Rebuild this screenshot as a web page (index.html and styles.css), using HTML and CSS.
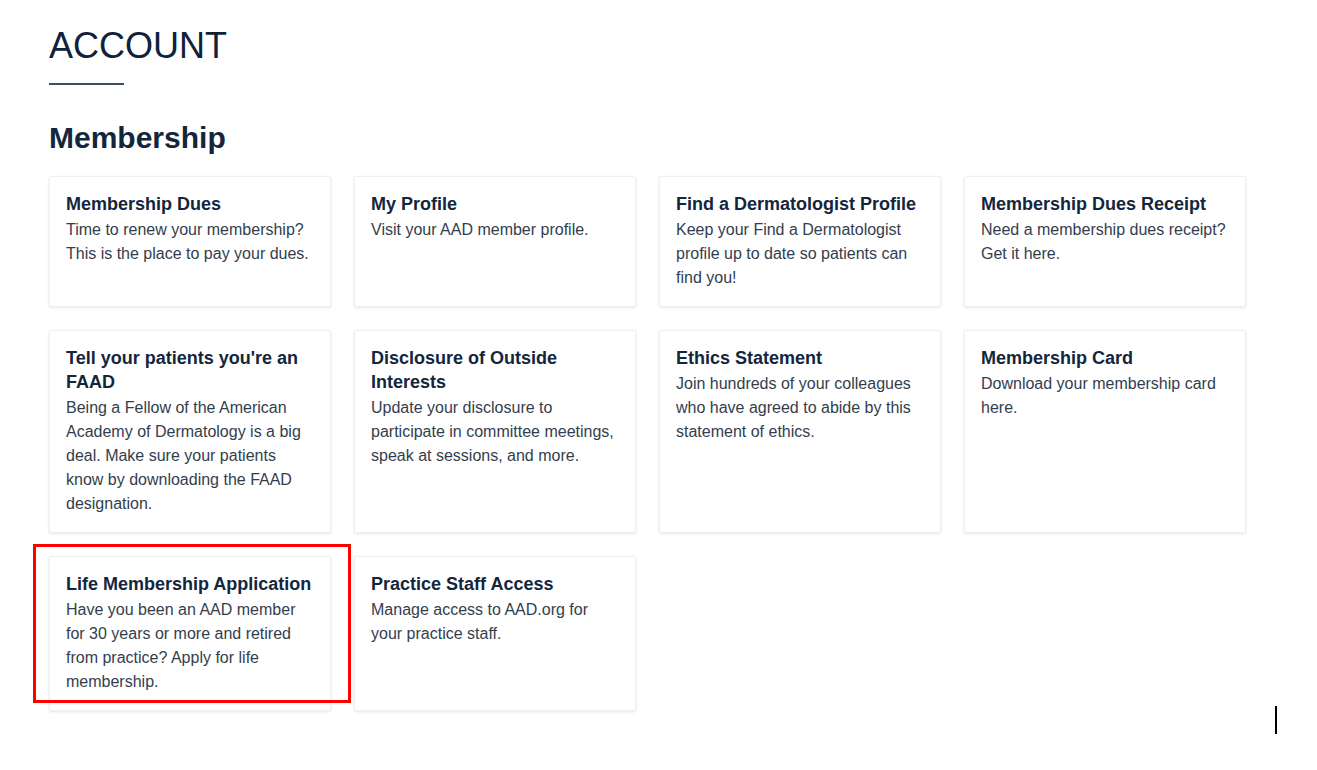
FILE: index.html
```html
<!DOCTYPE html>
<html lang="en">
<head>
<meta charset="utf-8">
<title>Account</title>
<link rel="stylesheet" href="styles.css">
</head>
<body>
<main class="page">
  <h1 class="page-title">ACCOUNT</h1>
  <div class="title-rule"></div>
  <h2 class="section-title">Membership</h2>
  <div class="cards">
    <a class="card" href="#"><h3 class="card-title">Membership Dues</h3><p class="card-text">Time to renew your membership? This is the place to pay your dues.</p></a>
    <a class="card" href="#"><h3 class="card-title">My Profile</h3><p class="card-text">Visit your AAD member profile.</p></a>
    <a class="card" href="#"><h3 class="card-title">Find a Dermatologist Profile</h3><p class="card-text">Keep your Find a Dermatologist profile up to date so patients can find you!</p></a>
    <a class="card" href="#"><h3 class="card-title">Membership Dues Receipt</h3><p class="card-text">Need a membership dues receipt? Get it here.</p></a>
    <a class="card" href="#"><h3 class="card-title">Tell your patients you're an FAAD</h3><p class="card-text">Being a Fellow of the American Academy of Dermatology is a big deal. Make sure your patients know by downloading the FAAD designation.</p></a>
    <a class="card" href="#"><h3 class="card-title">Disclosure of Outside Interests</h3><p class="card-text">Update your disclosure to participate in committee meetings, speak at sessions, and more.</p></a>
    <a class="card" href="#"><h3 class="card-title">Ethics Statement</h3><p class="card-text">Join hundreds of your colleagues who have agreed to abide by this statement of ethics.</p></a>
    <a class="card" href="#"><h3 class="card-title">Membership Card</h3><p class="card-text">Download your membership card here.</p></a>
    <a class="card card-highlight" href="#"><h3 class="card-title">Life Membership Application</h3><p class="card-text">Have you been an AAD member for 30 years or more and retired from practice? Apply for life membership.</p></a>
    <a class="card" href="#"><h3 class="card-title">Practice Staff Access</h3><p class="card-text">Manage access to AAD.org for your practice staff.</p></a>
  </div>
</main>
<div class="text-cursor"></div>
</body>
</html>
```
FILE: styles.css
```css
html, body {
  margin: 0;
  padding: 0;
  background: #ffffff;
}
body {
  font-family: "Liberation Sans", Arial, sans-serif;
  color: #13263d;
  position: relative;
  min-height: 770px;
}
.page {
  padding: 26px 0 0 49px;
  width: 1197px;
}
.page-title {
  margin: 0;
  font-size: 36px;
  line-height: 40px;
  font-weight: 400;
  color: #0f2239;
}
.title-rule {
  width: 75px;
  height: 2px;
  background: #3b4f63;
  margin-top: 17px;
}
.section-title {
  margin: 35px 0 20px 0;
  font-size: 30px;
  line-height: 36px;
  font-weight: 700;
  color: #13263d;
}
.cards {
  display: grid;
  grid-template-columns: repeat(4, 282px);
  gap: 23px;
}
.card {
  display: block;
  position: relative;
  text-decoration: none;
  background: #ffffff;
  border: 1px solid #f0f0f0;
  border-radius: 2px;
  box-shadow: 0 1px 3px rgba(0, 0, 0, 0.10);
  padding: 15px 16px 16px 16px;
}
.card-title {
  margin: 0;
  font-size: 18px;
  line-height: 24px;
  font-weight: 700;
  color: #13263d;
}
.card-text {
  margin: 2px 0 0 0;
  font-size: 16px;
  line-height: 24px;
  color: #333e4d;
}
.card-highlight::after {
  content: "";
  position: absolute;
  left: -17px;
  top: -13px;
  width: 312px;
  height: 153px;
  border: 3px solid #ff0000;
  pointer-events: none;
}
.text-cursor {
  position: absolute;
  left: 1275px;
  top: 706px;
  width: 2px;
  height: 28px;
  background: #000000;
}
```
